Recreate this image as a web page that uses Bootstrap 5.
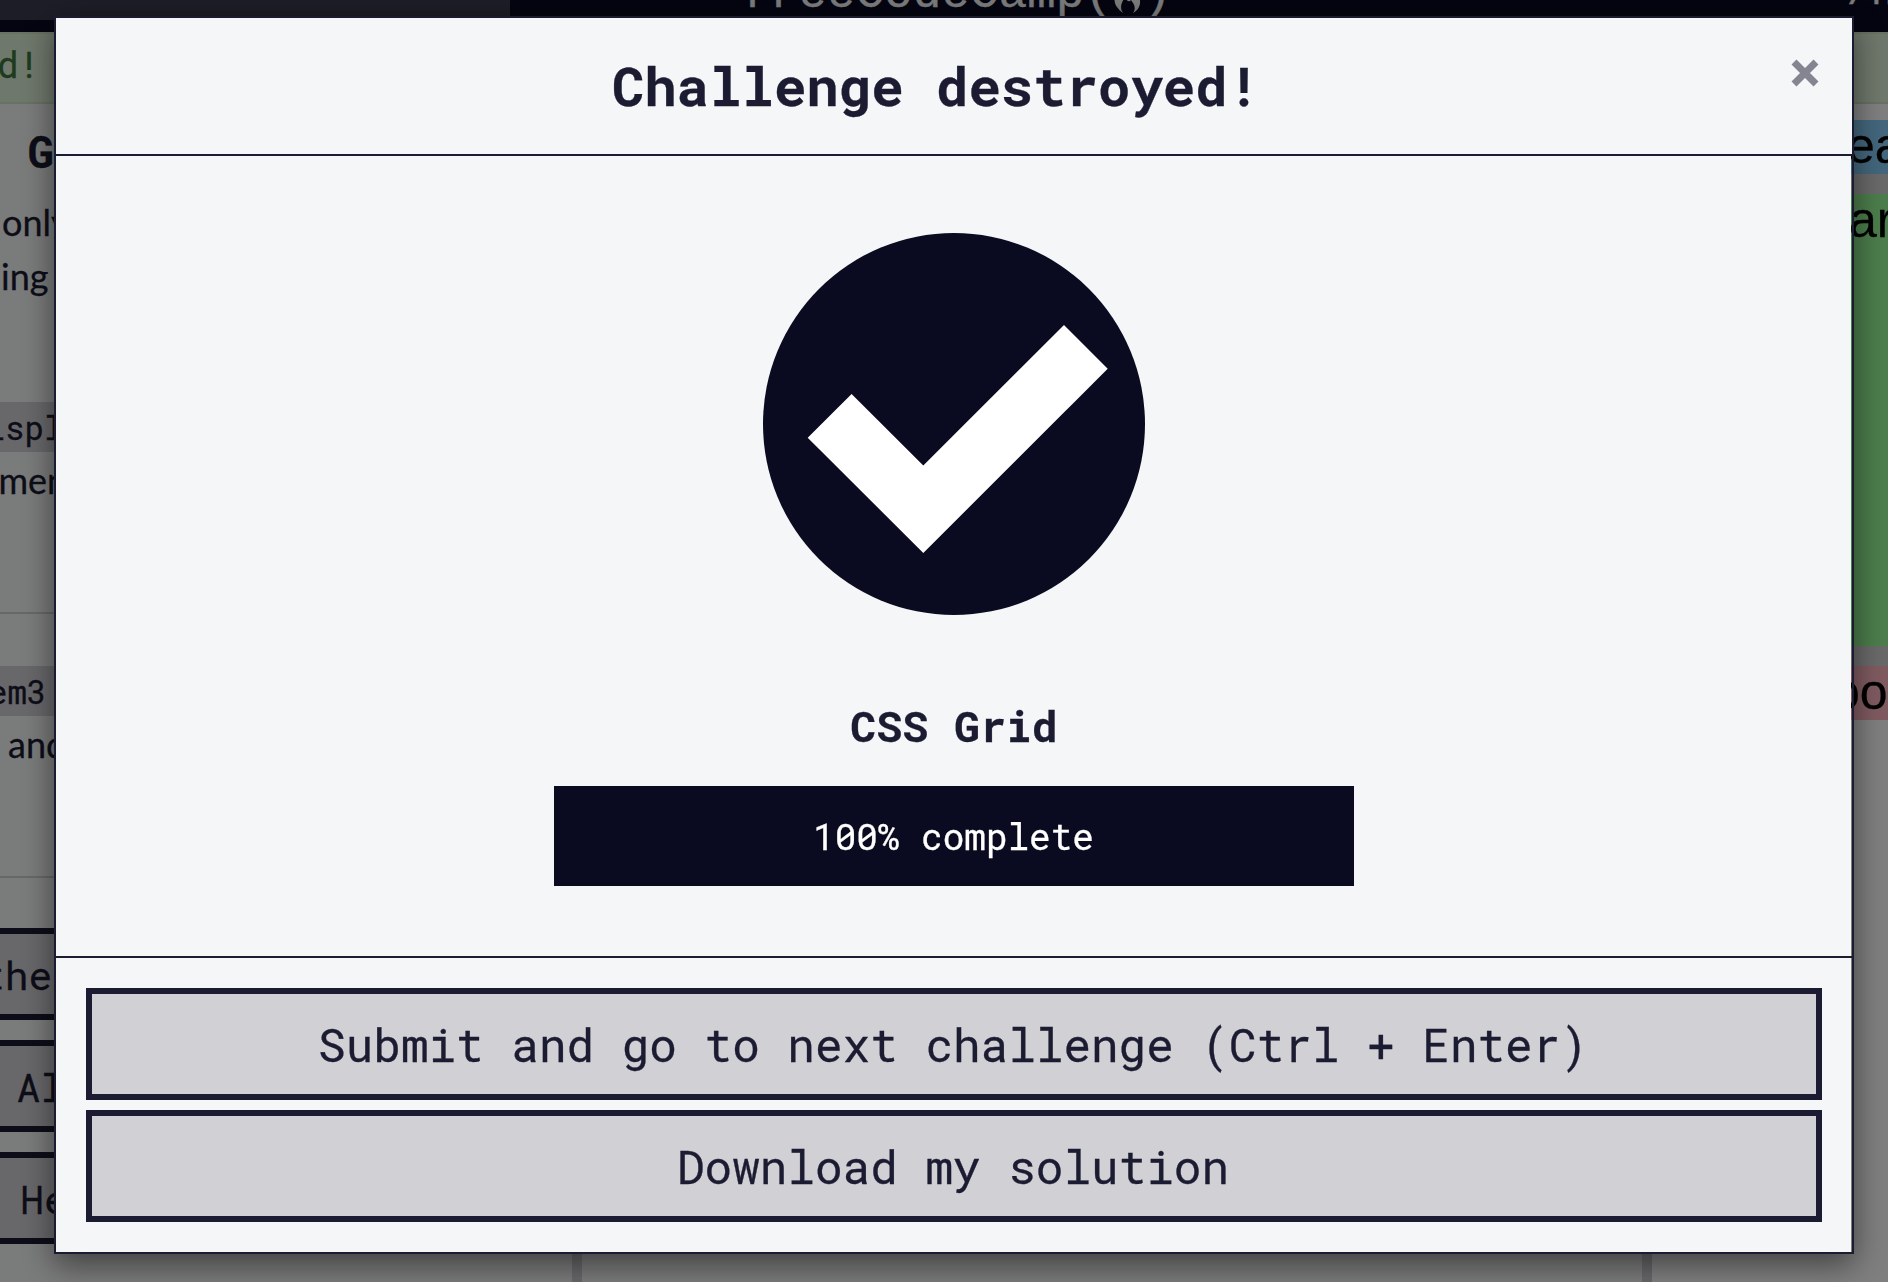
<!DOCTYPE html>
<html lang="en">
<head>
<meta charset="utf-8">
<meta name="viewport" content="width=device-width, initial-scale=1">
<title>CSS Grid challenge</title>
<link href="https://cdn.jsdelivr.net/npm/bootstrap@5.3.0/dist/css/bootstrap.min.css" rel="stylesheet">
<style>
  :root { --ink: #1b1b32; --navy: #0a0a23; --paper: #f5f6f7; --shade: #d0d0d5; --mono: "Roboto Mono", "DejaVu Sans Mono", monospace; }
  body { height: 1282px; overflow: hidden; background: var(--paper); color: var(--ink); font: 36px/54px Lato, sans-serif; -webkit-text-stroke: .3px; }
  .mono-text { font-family: var(--mono); }

  /* page behind the dialog */
  .site-nav { height: 32px; background: var(--navy); color: var(--paper); }
  .search-strip { width: 510px; height: 20px; background: #3b3b4f; }
  .site-logo { margin: -36px 0 0 231px; font: 48px/60px "Liberation Mono", monospace; letter-spacing: -.2px; }
  .site-logo svg { width: 33px; height: 44px; margin: 5px -1px 0 -2px; }
  .site-menu { margin: -36px 5px 0 auto; font: 40px/60px "Liberation Mono", monospace; width: 36px; white-space: nowrap; }
  .flash-bar { height: 72px; background: #dff0d8; border: solid #d0e2c4; border-width: 2px 0; color: #3c763d; line-height: 60px; text-indent: -3px; }
  .pane-lesson { width: 572px; }
  .pane-split { width: 10px; background: var(--shade); }
  .pane-editor { width: 1060px; }
  .pane-preview { background: #fff; font: 50px/50px "Liberation Sans", sans-serif; color: #000; padding-top: 16px; }
  .lesson-title { padding-top: 5px; font-size: 44px; line-height: 85px; margin-bottom: 1px; font-weight: 700; text-indent: 27.5px; }
  .lesson-copy { height: 108px; margin-bottom: 96px; }
  .lesson-copy + .lesson-copy, .rule-line + .lesson-copy { margin-bottom: 105px; }
  .lesson-copy code { font: 32.4px/1 var(--mono); color: var(--ink); background: var(--shade); padding: 4px 40px 3.2px 0; }
  .rule-line { height: 2px; background: var(--shade); margin-bottom: 49px; }
  .lesson-actions { gap: 20px; margin-top: 50px; }
  .lesson-actions .btn { height: 92px; margin-left: -10px; border: 6px solid var(--ink); background: var(--shade); color: var(--ink); font-size: 39.6px; line-height: 77px; padding: 2.6px 0 0; text-align: left; }
  .grid-demo { background: lightgray; gap: 20px; height: 600px; }
  .cell-box { height: 54px; padding: 1px 0 0 193px; overflow: hidden; white-space: nowrap; }
  .cell-blue { background: lightskyblue; padding-left: 195px; }
  .cell-green { background: palegreen; height: 452px; padding-left: 197px; }
  .cell-pink { background: lightpink; padding-left: 180px; }
  .modal-backdrop { --bs-backdrop-opacity: .5; width: 100%; height: 100%; }

  /* completion dialog */
  .modal-dialog { width: 1800px; max-width: none; margin: 16px 0 0 54px; }
  .modal-content { height: 1238px; border: 2px solid var(--ink); border-radius: 0; box-shadow: 0 10px 30px rgba(0,0,0,.5); color: var(--ink);
    background: linear-gradient(var(--paper), var(--paper)) 0 0 / calc(100% - 1px) 100% no-repeat; }
  .modal-header { height: 138px; padding: 0 30px; border-bottom: 2px solid var(--ink); border-radius: 0; background: var(--paper); }
  .modal-title { font-size: 54px; line-height: 132px; margin-bottom: 2px; font-weight: 700; }
  .close-x { width: 36px; height: 36px; margin: -27px -1px 0 1px; color: #858591; }
  .modal-body { flex: none; height: 800px; padding: 77px 0 0; }
  .done-icon { width: 382px; height: 382px; }
  .block-name { font-size: 43.2px; line-height: 60px; margin: 81px 0 30px; font-weight: 700; }
  .progress { width: 800px; height: 100px; border-radius: 0; background: #fff; }
  .progress-bar { background: #0a0a20; font: 36px/104px var(--mono); color: #fff; padding-right: 1px; }
  .modal-footer { padding: 30px; border-top: 2px solid var(--ink); gap: 10px; border-radius: 0; }
  .modal-footer .btn { height: 112px; margin: 0; padding: 0 2px 0 0; border: 6px solid var(--ink); border-radius: 0; background: var(--shade); color: var(--ink); font-size: 46px; line-height: 100px; }
</style>
<script src="https://cdn.jsdelivr.net/npm/bootstrap@5.3.0/dist/js/bootstrap.bundle.min.js"></script>
</head>
<body>
<header class="site-nav d-flex overflow-hidden">
  <div class="search-strip flex-shrink-0"></div>
  <div class="site-logo d-flex flex-shrink-0"><span>freeCodeCamp(</span><svg viewBox="0 0 33 44" preserveAspectRatio="none" fill="currentColor"><path d="M12 44C4 38 1 32 6 23C8 18 12 15 10 6C17 10 19 17 19 23C21 22 21 19 20 17C29 24 34 37 22 44C26 38 22 34 20 31C18 34 15 31 14 28C11 33 8 38 12 44Z"/></svg><span>)</span></div>
  <div class="site-menu">/n</div>
</header>
<div class="flash-bar mono-text">d!</div>
<main class="d-flex" style="height:1178px">
  <section class="pane-lesson flex-shrink-0 overflow-hidden">
    <div class="lesson-title mono-text">G</div>
    <div class="lesson-copy"><div style="text-indent:2px">only</div><div style="text-indent:1px">ing</div></div>
    <div class="lesson-copy"><div style="text-indent:-14.5px"><code>ispl</code></div><div style="text-indent:-1.5px">men</div></div>
    <div class="rule-line"></div>
    <div class="lesson-copy"><div style="text-indent:-12px"><code>em3</code></div><div style="text-indent:8px">and</div></div>
    <div class="rule-line mb-0"></div>
    <div class="lesson-actions d-flex flex-column mono-text">
      <button class="btn rounded-0" style="text-indent:-15px">the</button>
      <button class="btn rounded-0" style="text-indent:20.4px">Al</button>
      <button class="btn rounded-0" style="text-indent:24.3px">He</button>
    </div>
  </section>
  <div class="pane-split flex-shrink-0"></div>
  <section class="pane-editor flex-shrink-0"></section>
  <div class="pane-split flex-shrink-0"></div>
  <section class="pane-preview flex-grow-1">
    <div class="grid-demo d-flex flex-column">
      <div class="cell-box cell-blue">ea</div>
      <div class="cell-box cell-green">ar</div>
      <div class="cell-box cell-pink">oo</div>
    </div>
  </section>
</main>

<div class="modal-backdrop show"></div>
<div class="modal d-block overflow-hidden" tabindex="-1" role="dialog">
  <div class="modal-dialog">
    <div class="modal-content">
      <div class="modal-header">
        <h1 class="modal-title mono-text flex-grow-1 text-center">Challenge destroyed!</h1>
        <button class="btn p-0 border-0 close-x d-flex align-items-center justify-content-center" aria-label="Close"><svg width="28" height="28" viewBox="-14 -14 28 28" stroke="currentColor" stroke-width="7"><path d="M-11-11 11 11M11-11-11 11"/></svg></button>
      </div>
      <div class="modal-body d-flex flex-column align-items-center">
        <svg class="done-icon flex-shrink-0" viewBox="0 0 382 382"><circle cx="191" cy="191" r="191" fill="#0a0a20"/><path fill="#fff" d="M44.7 204.7 88.6 161 160.3 232.4 301 92 344.7 135.7 160.3 320Z"/></svg>
        <h2 class="block-name mono-text">CSS Grid</h2>
        <div class="progress"><div class="progress-bar" style="width:100%">100% complete</div></div>
      </div>
      <div class="modal-footer flex-column align-items-stretch justify-content-start mono-text">
        <button class="btn">Submit and go to next challenge (Ctrl + Enter)</button>
        <button class="btn">Download my solution</button>
      </div>
    </div>
  </div>
</div>
</body>
</html>
